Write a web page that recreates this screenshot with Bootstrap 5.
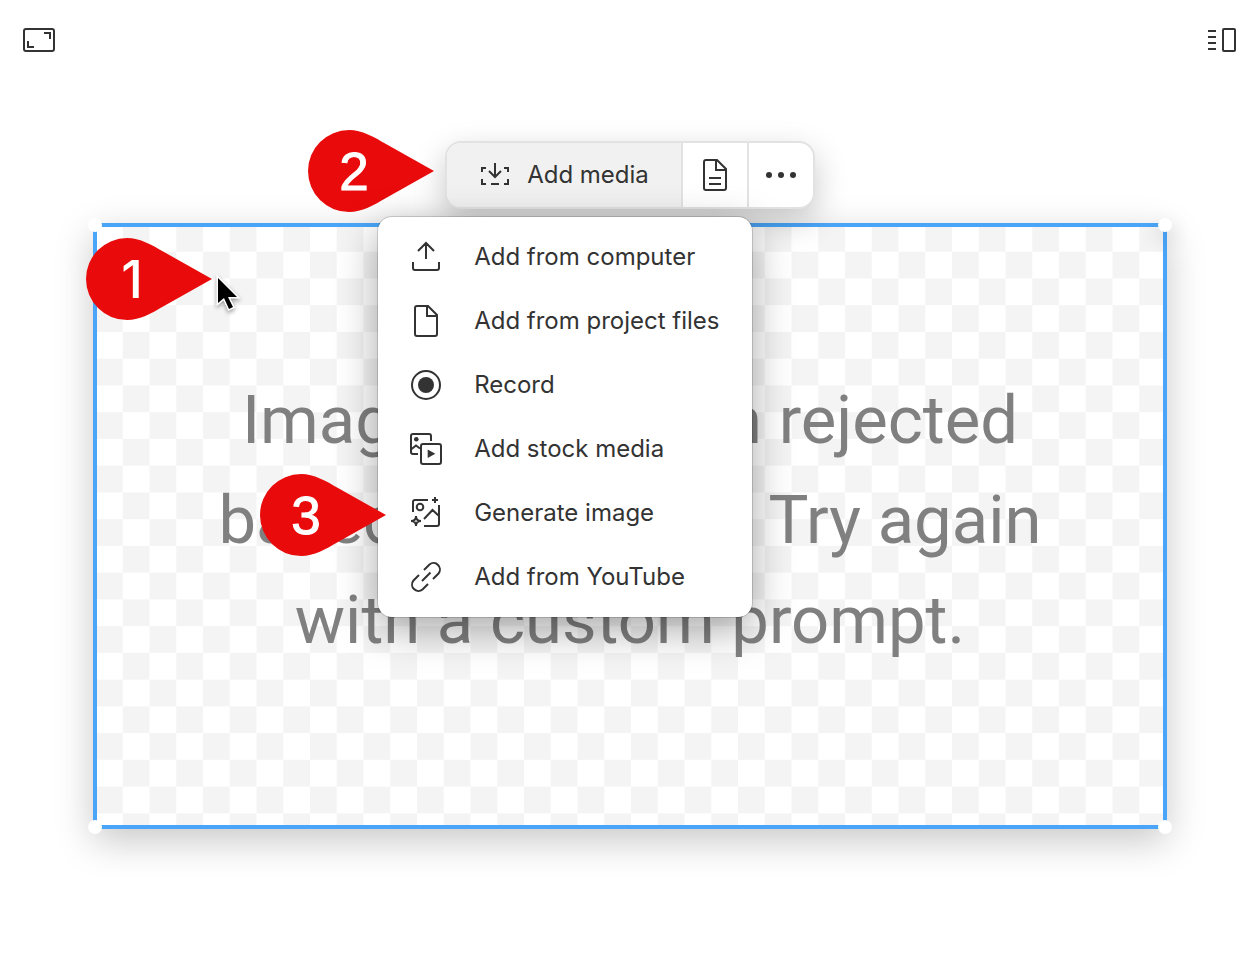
<!DOCTYPE html>
<html lang="en">
<head>
<meta charset="utf-8">
<meta name="viewport" content="width=device-width, initial-scale=1">
<title>Add media</title>
<link href="https://cdn.jsdelivr.net/npm/bootstrap@5.3.0/dist/css/bootstrap.min.css" rel="stylesheet">
<style>
  body { font-family: Inter, "Liberation Sans", sans-serif; color: #333; background: #fff; }
  svg { display: block; flex: none; }
  .line-icon { width: 32px; height: 32px; fill: none; stroke: #333; stroke-width: 2; }
  .plain-btn { border: 0; background: none; padding: 0; color: #333; }
  .topbar { padding: 28px 24px 0 23px; }
  .workspace { padding: 89px 93px 48px; }
  .tools { border: 2px solid #e2e2e2; border-radius: 16px; background: #fff; z-index: 3;
    box-shadow: 0 12px 32px rgba(0,0,0,.22); font-size: 24px; line-height: 32px; }
  .tools .tool-btn { height: 64px; padding: 0 16px; }
  .tools .add-wrap + .tool-btn, .tools .tool-btn + .tool-btn { border-left: 2px solid #e2e2e2; }
  .tools .tool-add { gap: 16px; padding: 0 32px; background: #f1f1f1; border-radius: 14px 0 0 14px; }
  .media-menu { top: 74px; left: -69px; display: block; min-width: 0;
    padding: 8px 0; border: 0; border-radius: 14px; font-size: 24px; color: #333;
    box-shadow: 0 0 0 1px rgba(0,0,0,.15), 0 12px 40px rgba(0,0,0,.35); }
  .media-menu .dropdown-item { height: 64px; padding: 0 32px; gap: 32px; color: #333; line-height: 32px; }
  .slot { aspect-ratio: 1074 / 606; margin-top: 14px; border: 4px solid #4aa5f8; padding-bottom: 12px;
    background: conic-gradient(#f4f4f4 25%, #fff 0 50%, #f4f4f4 0 75%, #fff 0) -1px -2px / 5.019% 8.946%;
    box-shadow: 0 12px 36px rgba(0,0,0,.22); }
  .slot-text { font-family: Roboto, sans-serif; font-size: 67px; line-height: 100px; color: #808080; margin: 0; white-space: nowrap; }
  .grip { width: 14px; height: 14px; border-radius: 50%; background: #fff; }
  .grip-tl { left: -9px; top: -9px; } .grip-tr { right: -9px; top: -9px; box-shadow: 0 8px 20px rgba(0,0,0,.2); }
  .grip-bl { left: -9px; bottom: -9px; } .grip-br { right: -9px; bottom: -9px; }
  .pin { width: 126px; height: 82px; z-index: 5; pointer-events: none; }
  .pin path { fill: #e90b0b; }
  .pin text { font: 53px "Liberation Sans", sans-serif; fill: #fff; stroke: #fff; stroke-width: 1px; text-anchor: middle; }
  .pin-1 text { font: 500 52px Inter, sans-serif; stroke: none; }
  .pin-1 { left: -11px; top: 11px; }
  .pin-2 { right: 100%; top: -13px; margin-right: 13px; }
  .pin-3 { left: -118px; top: -7px; }
  .pointer { left: 117px; top: 47px; filter: drop-shadow(0 2px 2px rgba(0,0,0,.4)); }
</style>
</head>
<body>
<header class="topbar d-flex justify-content-between">
  <button class="plain-btn" type="button" aria-label="Full screen">
    <svg width="32" height="24" fill="none" stroke="#333" stroke-width="2"><rect x="1" y="1" width="30" height="22" rx="2"/><path d="M21 5h6v6M5 13v6h6"/></svg>
  </button>
  <button class="plain-btn" type="button" aria-label="Side panel">
    <svg width="29" height="24" fill="none" stroke="#333" stroke-width="2"><path d="M1 3h8M1 9h8M1 15h8M1 21h8"/><rect x="16" y="1" width="12" height="22" rx="1"/></svg>
  </button>
</header>

<main class="workspace">
  <div class="d-flex justify-content-center">
    <div class="tools d-flex position-relative" role="toolbar" aria-label="Media tools">
      <svg class="pin pin-2 position-absolute"><path d="M41 0C54 0 66 7 78 14L126 41 78 68C66 75 54 82 41 82A41 41 0 0 1 41 0z"/><text x="46" y="60">2</text></svg>
      <div class="add-wrap position-relative">
        <button class="plain-btn tool-btn tool-add d-flex align-items-center" type="button" aria-expanded="true">
          <svg class="line-icon"><path d="M7 9H3v4M25 9h4v4M3 20v5h4M29 20v5h-4M12 25h8M16 4v14M10 12l6 6 6-6"/></svg>
          <span>Add media</span>
        </button>
        <ul class="media-menu dropdown-menu">
          <li><a class="dropdown-item d-flex align-items-center" href="#">
            <svg class="line-icon"><path d="M3 21v6a2 2 0 0 0 2 2h22a2 2 0 0 0 2-2v-6M16 18V3M8 10l8-8 8 8"/></svg>Add from computer</a></li>
          <li><a class="dropdown-item d-flex align-items-center" href="#">
            <svg class="line-icon"><path d="M7 1H18l9 9v19a2 2 0 0 1-2 2H7a2 2 0 0 1-2-2V3a2 2 0 0 1 2-2zM17 1v10h10"/></svg>Add from project files</a></li>
          <li><a class="dropdown-item d-flex align-items-center" href="#">
            <svg class="line-icon"><circle cx="16" cy="16" r="14"/><circle cx="16" cy="16" r="8" fill="#333" stroke="none"/></svg>Record</a></li>
          <li><a class="dropdown-item d-flex align-items-center" href="#">
            <svg class="line-icon"><path d="M21 8V3a2 2 0 0 0-2-2H3a2 2 0 0 0-2 2v16a2 2 0 0 0 2 2h5M1 16.500l5-4 4 3"/><circle cx="6.300" cy="6.300" r="2.300" fill="#333" stroke="none"/><rect x="11" y="11" width="20" height="20" rx="2"/><path d="M17.700 16.500v8.400l7.600-4.200z" fill="#333" stroke="none"/></svg>Add stock media</a></li>
          <li class="position-relative">
            <svg class="pin pin-3 position-absolute"><path d="M41 0C54 0 66 7 78 14L126 41 78 68C66 75 54 82 41 82A41 41 0 0 1 41 0z"/><text x="46" y="60">3</text></svg>
            <a class="dropdown-item d-flex align-items-center" href="#">
            <svg class="line-icon"><path d="M3 15V5a2 2 0 0 1 2-2h13M29 8v19a2 2 0 0 1-2 2H14M14 22l8.500-9 6.500 6M25 0v6M22 3h6"/><circle cx="10" cy="10" r="3.300"/><path d="M6 19q0 5 5 5q-5 0-5 5q0-5-5-5q5 0 5-5z"/></svg>Generate image</a></li>
          <li><a class="dropdown-item d-flex align-items-center" href="#">
            <svg class="line-icon"><path d="M14 9l5.500-5.500a6.400 6.400 0 0 1 9 9L23 18M9 14l-5.500 5.500a6.400 6.400 0 0 0 9 9L18 23M12 20l8.500-8.500"/></svg>Add from YouTube</a></li>
        </ul>
      </div>
      <button class="plain-btn tool-btn" type="button" aria-label="Description">
        <svg class="line-icon"><path d="M7 1H18l9 9v19a2 2 0 0 1-2 2H7a2 2 0 0 1-2-2V3a2 2 0 0 1 2-2zM17 1v10h10M10 19h12M10 25h12"/></svg>
      </button>
      <button class="plain-btn tool-btn" type="button" aria-label="More">
        <svg class="line-icon"><g fill="#333" stroke="none"><circle cx="4" cy="16" r="3"/><circle cx="16" cy="16" r="3"/><circle cx="28" cy="16" r="3"/></g></svg>
      </button>
    </div>
  </div>

  <section class="slot position-relative d-flex align-items-center justify-content-center text-center">
    <p class="slot-text">Image generation rejected<br>based on content. Try again<br>with a custom prompt.</p>
    <span class="grip grip-tl position-absolute"></span>
    <span class="grip grip-tr position-absolute"></span>
    <span class="grip grip-bl position-absolute"></span>
    <span class="grip grip-br position-absolute"></span>
    <svg class="pin pin-1 position-absolute"><path d="M41 0C54 0 66 7 78 14L126 41 78 68C66 75 54 82 41 82A41 41 0 0 1 41 0z"/><text x="46" y="60">1</text></svg>
    <svg class="pointer position-absolute" width="28" height="38"><path d="M4 4v25l6-5 5 11 4-2-5-10h9z" fill="#000" stroke="#fff" stroke-width="3" paint-order="stroke"/></svg>
  </section>
</main>
<script src="https://cdn.jsdelivr.net/npm/bootstrap@5.3.0/dist/js/bootstrap.bundle.min.js"></script>
</body>
</html>
